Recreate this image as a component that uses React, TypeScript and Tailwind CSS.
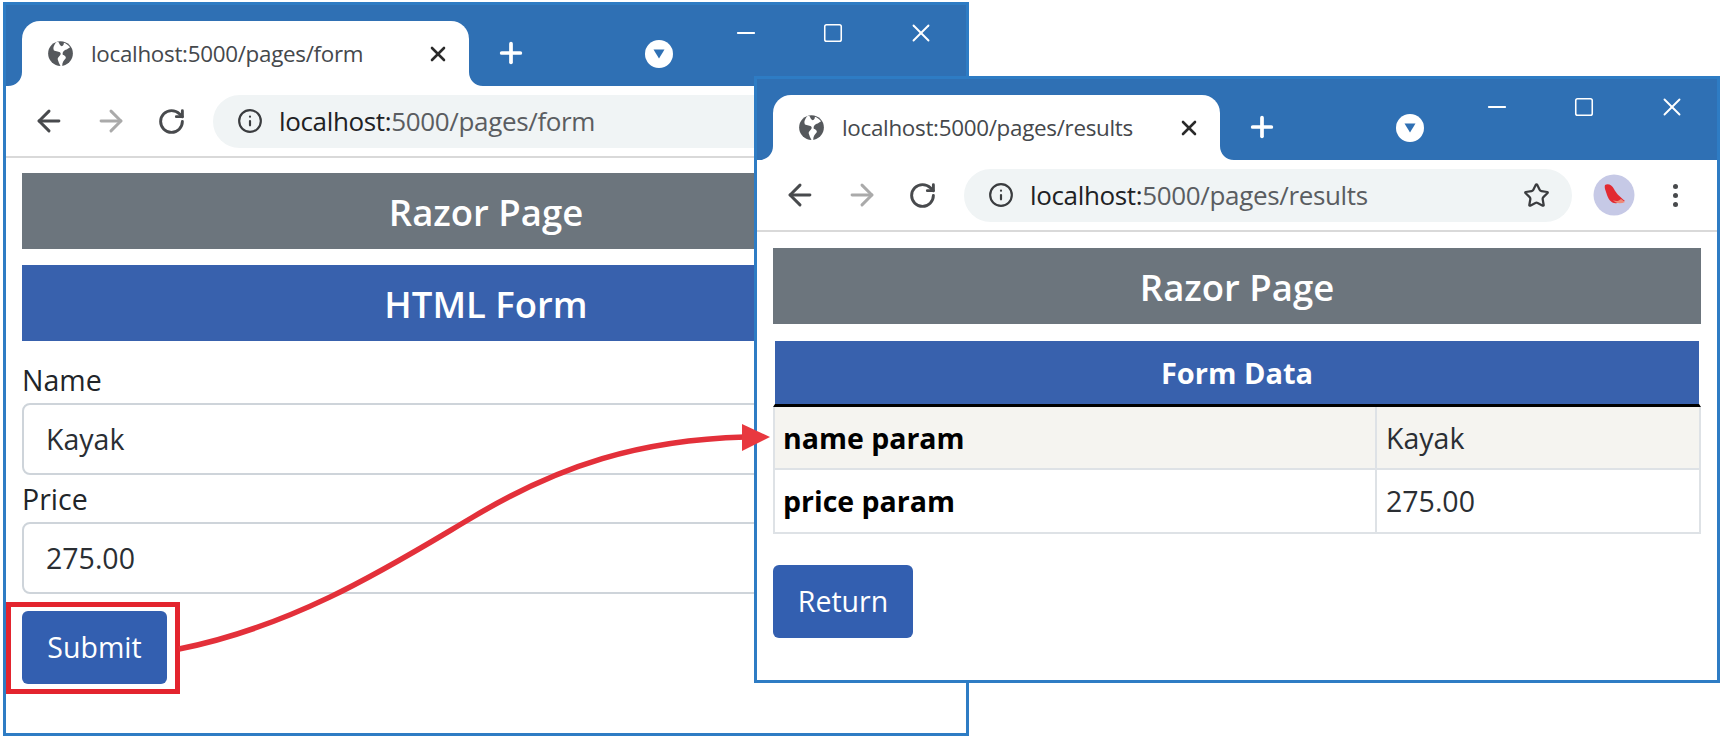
import React from "react";
import { ArrowLeft, ArrowRight, RotateCw, Info, Star, X, Plus, Minus, Square } from "lucide-react";

function Globe() {
  return (
    <svg width="27" height="27" viewBox="0 0 24 24" className="shrink-0">
      <circle cx="12" cy="12" r="11" fill="#55585c" />
      <path d="M8 2 C6.5 4.5 5 6.5 6 9 C8 10.5 11 9.5 12 11.5 C13 13.5 9.5 15 9.5 17 C10 19 11 21 12 23 L13.5 23 C13.5 20 15 18 16.5 16.5 C17.5 15 15.5 13.5 14 13 C13.5 11 15 9 17.5 8.5 L20.5 6.5 C18.5 4 16.5 3 15 2.5 C15 4 14.5 5.5 13 5.5 C11.5 5 11 3 10 1.5 Z" fill="#fff" />
    </svg>
  );
}

function Bird() {
  return (
    <svg width="42" height="42" viewBox="0 0 42 42">
      <circle cx="21" cy="21" r="20.5" fill="#c6c9e6" />
      <path d="M12 11 C15 9 19 11 21 15 C23 19 26 22 32 27 C28 28 26 27 24 29 C20 30 16 27 14 21 C13 17 11 14 12 11 Z" fill="#e22a32" />
      <path d="M20 26 C23 28 26 27 28 25 L32 28 C28 30 23 30 20 26 Z" fill="#ee8a78" />
    </svg>
  );
}

function Flare({ side }: { side: "left" | "right" }) {
  return (
    <svg
      width="14"
      height="14"
      viewBox="0 0 14 14"
      className={side === "left" ? "absolute bottom-0 -left-[14px]" : "absolute bottom-0 -right-[14px]"}
    >
      <path d={side === "left" ? "M14 0 C14 8 8 14 0 14 L14 14 Z" : "M0 0 C0 8 6 14 14 14 L0 14 Z"} fill="#fff" />
    </svg>
  );
}

function Chrome({ title, path }: { title: string; path: string }) {
  return (
    <>
      <div className="flex h-[81px] shrink-0 bg-[#2f70b4]">
        <div className="relative ml-[16px] mt-[16px] flex h-[65px] w-[447px] shrink-0 items-center rounded-t-[18px] bg-white pl-[25px] text-[#45484c]">
          <Flare side="left" />
          <Flare side="right" />
          <Globe />
          <span className="ml-[17px] w-[335px] whitespace-nowrap text-[22.4px] tracking-[-0.3px]">{title}</span>
          <X size={24} strokeWidth={2.6} className="text-[#2a2a2a]" />
        </div>
        <div className="ml-[26px] mt-[32px] h-[34px]">
          <Plus size={32} strokeWidth={2.8} className="text-white" />
        </div>
        <div className="ml-[118px] mt-[35px] flex h-[28px] w-[28px] items-center justify-center rounded-full bg-white">
          <svg width="14" height="12" viewBox="0 0 14 12">
            <path d="M1.5 1.5 H12.5 L7 10.5 Z" fill="#2f70b4" />
          </svg>
        </div>
        <div className="ml-auto flex items-start pr-[30px] pt-[14px] text-white">
          <Minus size={28} strokeWidth={1.6} />
          <Square size={22} strokeWidth={1.7} className="ml-[62px] mt-[3px]" />
          <X size={30} strokeWidth={1.5} className="ml-[62px] -mt-[1px]" />
        </div>
      </div>
      <div className="flex h-[72px] shrink-0 items-center border-b-2 border-[#d9d9d9] pl-[26px] pr-[39px]">
        <ArrowLeft size={34} strokeWidth={2.1} className="text-[#484a4d]" />
        <ArrowRight size={34} strokeWidth={2.1} className="ml-[28px] text-[#aaaaaa]" />
        <RotateCw size={29} strokeWidth={2.4} className="ml-[29px] text-[#484a4d]" />
        <div className="ml-[27px] flex h-[53px] w-[608px] shrink-0 items-center rounded-full bg-[#f0f4f5] pl-[24px]">
          <Info size={26} strokeWidth={2} className="text-[#3a3c3f]" />
          <span className="ml-[16px] whitespace-nowrap text-[26px] tracking-[-0.35px] text-[#5a5d61]">
            <span className="text-[#202124]">localhost:</span>
            {path}
          </span>
          <Star size={27} strokeWidth={2} className="ml-auto mr-[22px] text-[#3a3c3f]" />
        </div>
        <div className="ml-[21px]">
          <Bird />
        </div>
        <div className="ml-auto flex flex-col gap-[4px]">
          <span className="h-[5px] w-[5px] rounded-full bg-[#484a4d]" />
          <span className="h-[5px] w-[5px] rounded-full bg-[#484a4d]" />
          <span className="h-[5px] w-[5px] rounded-full bg-[#484a4d]" />
        </div>
      </div>
    </>
  );
}

function Banner({ text, color }: { text: string; color: string }) {
  return (
    <div className={`flex h-[76px] items-center justify-center pt-[2px] text-[36.5px] font-semibold text-white ${color}`}>
      {text}
    </div>
  );
}

function Field({ label, value }: { label: string; value: string }) {
  return (
    <div>
      <div className="flex h-[47px] items-center pt-[1px] text-[28.5px] text-[#212529]">{label}</div>
      <div className="flex h-[72px] items-center rounded-[8px] border-2 border-[#ced4da] bg-white pl-[22px] pt-[1px] text-[28.5px] text-[#2a2e33]">
        {value}
      </div>
    </div>
  );
}

function Btn({ text, w }: { text: string; w: string }) {
  return (
    <button className={`flex h-[73px] items-center justify-center rounded-[6px] bg-[#335fb0] text-[28.5px] text-white ${w}`}>
      {text}
    </button>
  );
}

export default function App() {
  return (
    <div className="relative h-[740px] w-[1725px] overflow-hidden bg-white font-['Open_Sans',sans-serif]">
      <div className="absolute left-[3px] top-[2px] flex h-[734px] w-[966px] flex-col border-[3px] border-[#2e7cc4] bg-white">
        <Chrome title="localhost:5000/pages/form" path="5000/pages/form" />
        <div className="flex flex-col px-[16px] pt-[15px]">
          <Banner text="Razor Page" color="bg-[#6c757d]" />
          <div className="mt-[16px]">
            <Banner text="HTML Form" color="bg-[#3861ad]" />
          </div>
          <div className="mt-[15px]">
            <Field label="Name" value="Kayak" />
          </div>
          <Field label="Price" value="275.00" />
          <div className="mt-[17px]">
            <Btn text="Submit" w="w-[145px]" />
          </div>
        </div>
      </div>

      <div className="absolute left-[754px] top-[76px] flex h-[607px] w-[966px] flex-col border-[3px] border-[#2e7cc4] bg-white">
        <Chrome title="localhost:5000/pages/results" path="5000/pages/results" />
        <div className="flex flex-col px-[16px] pt-[16px]">
          <Banner text="Razor Page" color="bg-[#6c757d]" />
          <table className="mt-[17px] w-[928px] table-fixed border-separate border-spacing-0 text-[28.5px]">
            <colgroup>
              <col className="w-[604px]" />
              <col className="w-[324px]" />
            </colgroup>
            <thead>
              <tr>
                <th colSpan={2} className="h-[66px] border-x-2 border-b-[3px] border-x-white border-b-black bg-[#3861ad] text-center text-[29px] font-bold text-white">
                  Form Data
                </th>
              </tr>
            </thead>
            <tbody className="text-[#212529]">
              <tr className="h-[63px] bg-[#f5f4f0]">
                <td className="border-b-2 border-l-2 border-r-2 border-[#dee2e6] pl-[8px] pt-[1px] font-bold text-black">name param</td>
                <td className="border-b-2 border-r-2 border-[#dee2e6] pl-[9px] pt-[1px] text-[#2a2e33]">Kayak</td>
              </tr>
              <tr className="h-[64px]">
                <td className="border-b-2 border-l-2 border-r-2 border-[#dee2e6] pl-[8px] pt-[1px] font-bold text-black">price param</td>
                <td className="border-b-2 border-r-2 border-[#dee2e6] pl-[9px] pt-[1px] text-[#2a2e33]">275.00</td>
              </tr>
            </tbody>
          </table>
          <div className="mt-[31px]">
            <Btn text="Return" w="w-[140px]" />
          </div>
        </div>
      </div>

      <div className="absolute left-[6px] top-[602px] h-[92px] w-[174px] border-[5px] border-[#e3242e]" />
      <svg width="1725" height="740" viewBox="0 0 1725 740" className="pointer-events-none absolute left-0 top-0">
        <path d="M179 649 C 300 625, 400 560, 473 517 C 560 465, 640 440, 745 437" fill="none" stroke="#e3303a" strokeWidth="5.5" />
        <path d="M742 424 L770 437 L742 451 Z" fill="#e8383f" />
      </svg>
    </div>
  );
}
